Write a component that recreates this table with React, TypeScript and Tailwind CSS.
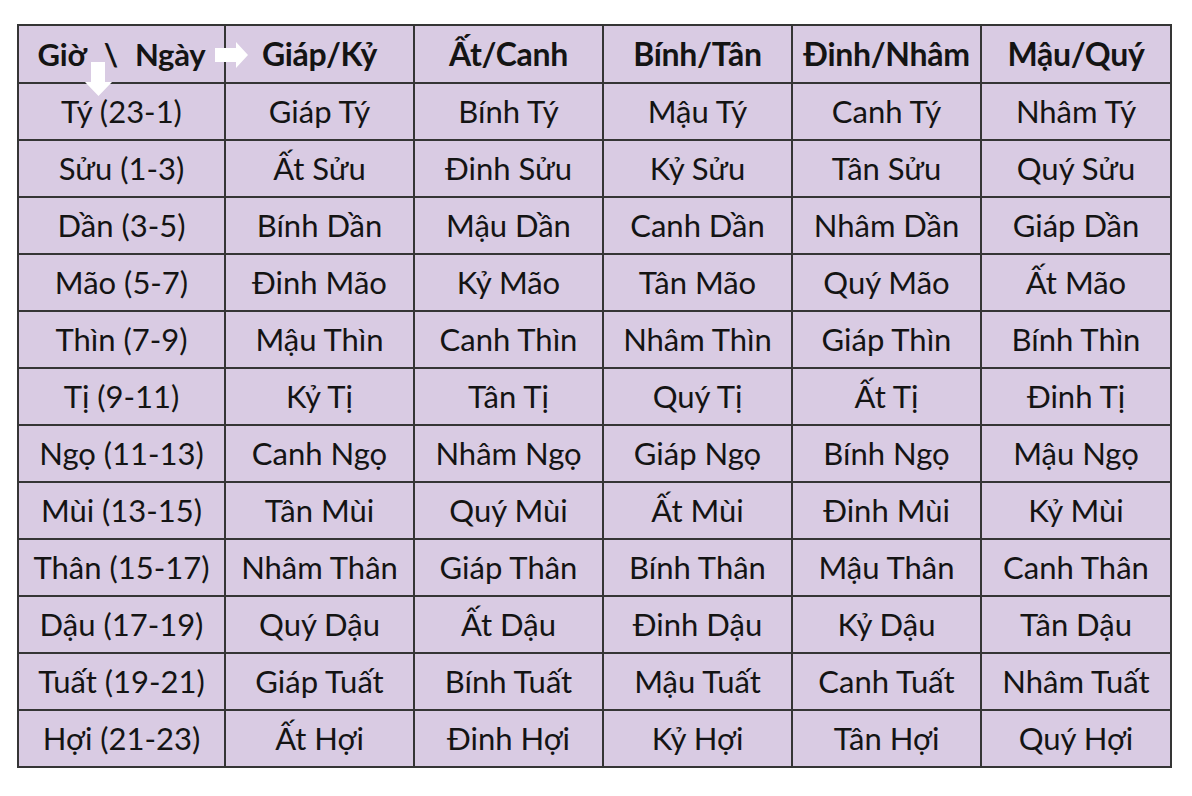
import React from "react";

const headers = ["Giáp/Kỷ", "Ất/Canh", "Bính/Tân", "Đinh/Nhâm", "Mậu/Quý"];

const rows: string[][] = [
  ["Tý (23-1)", "Giáp Tý", "Bính Tý", "Mậu Tý", "Canh Tý", "Nhâm Tý"],
  ["Sửu (1-3)", "Ất Sửu", "Đinh Sửu", "Kỷ Sửu", "Tân Sửu", "Quý Sửu"],
  ["Dần (3-5)", "Bính Dần", "Mậu Dần", "Canh Dần", "Nhâm Dần", "Giáp Dần"],
  ["Mão (5-7)", "Đinh Mão", "Kỷ Mão", "Tân Mão", "Quý Mão", "Ất Mão"],
  ["Thìn (7-9)", "Mậu Thìn", "Canh Thìn", "Nhâm Thìn", "Giáp Thìn", "Bính Thìn"],
  ["Tị (9-11)", "Kỷ Tị", "Tân Tị", "Quý Tị", "Ất Tị", "Đinh Tị"],
  ["Ngọ (11-13)", "Canh Ngọ", "Nhâm Ngọ", "Giáp Ngọ", "Bính Ngọ", "Mậu Ngọ"],
  ["Mùi (13-15)", "Tân Mùi", "Quý Mùi", "Ất Mùi", "Đinh Mùi", "Kỷ Mùi"],
  ["Thân (15-17)", "Nhâm Thân", "Giáp Thân", "Bính Thân", "Mậu Thân", "Canh Thân"],
  ["Dậu (17-19)", "Quý Dậu", "Ất Dậu", "Đinh Dậu", "Kỷ Dậu", "Tân Dậu"],
  ["Tuất (19-21)", "Giáp Tuất", "Bính Tuất", "Mậu Tuất", "Canh Tuất", "Nhâm Tuất"],
  ["Hợi (21-23)", "Ất Hợi", "Đinh Hợi", "Kỷ Hợi", "Tân Hợi", "Quý Hợi"],
];

export default function App() {
  return (
    <div
      className="w-[1192px] h-[796px] bg-white pt-[24px] pl-[17px]"
      style={{ fontFamily: "Lato, 'Noto Sans', sans-serif" }}
    >
      <div className="relative w-[1153px]">
        <table className="table-fixed border-collapse w-[1153px] bg-[#d9cbe3] text-[#141414]">
          <colgroup>
            <col className="w-[207px]" />
            <col className="w-[189px]" />
            <col className="w-[189px]" />
            <col className="w-[189px]" />
            <col className="w-[189px]" />
            <col className="w-[190px]" />
          </colgroup>
          <thead>
            <tr className="h-[58px]">
              <th className="border-2 border-[#353535] p-0 text-[31px] font-bold text-center align-middle">
                <div className="flex justify-center items-center gap-[17px] tracking-[-0.2px]">
                  <span>Giờ</span>
                  <span>\</span>
                  <span>Ngày</span>
                </div>
              </th>
              {headers.map((h) => (
                <th
                  key={h}
                  className="border-2 border-[#353535] p-0 text-[32px] font-bold text-center align-middle whitespace-nowrap tracking-[-0.3px]"
                >
                  {h}
                </th>
              ))}
            </tr>
          </thead>
          <tbody>
            {rows.map((r, i) => (
              <tr key={i} className="h-[57px]">
                {r.map((c, j) => (
                  <td
                    key={j}
                    className="border-2 border-[#353535] p-0 text-[31px] text-center align-middle whitespace-nowrap"
                  >
                    {c}
                  </td>
                ))}
              </tr>
            ))}
          </tbody>
        </table>
        {/* right arrow */}
        <svg
          className="absolute left-[198px] top-[18px]"
          width="34"
          height="27"
          viewBox="0 0 34 27"
        >
          <polygon points="0,6 21,6 21,0 33,13 21,26 21,20 0,20" fill="#ffffff" />
        </svg>
        {/* down arrow */}
        <svg
          className="absolute left-[68px] top-[38px]"
          width="28"
          height="35"
          viewBox="0 0 28 35"
        >
          <polygon points="6,0 20,0 20,20 27,20 13.5,34 0,20 6,20" fill="#ffffff" />
        </svg>
      </div>
    </div>
  );
}
